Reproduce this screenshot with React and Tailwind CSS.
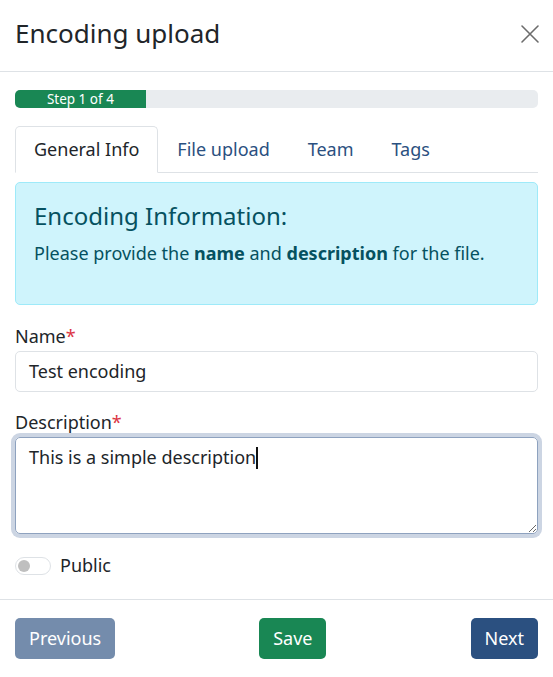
import React from "react";

export default function App() {
  return (
    <div className="w-[553px] h-[677px] bg-white flex flex-col text-[#212529]" style={{ fontFamily: '"Noto Sans", "Open Sans", sans-serif' }}>
      {/* Header */}
      <div className="h-[72px] shrink-0 border-b border-[#dee2e6] flex items-start justify-between pl-[15px] pr-[13px] pt-[14px]">
        <h1 className="text-[26px] leading-[39px] font-normal text-[#212529]">Encoding upload</h1>
        <button className="mt-[10px] w-[20px] h-[20px] flex items-center justify-center text-[#6c6c6c]">
          <svg width="20" height="20" viewBox="0 0 20 20" fill="none" stroke="currentColor" strokeWidth="1.6" strokeLinecap="round">
            <path d="M2 2 L18 18 M18 2 L2 18" />
          </svg>
        </button>
      </div>

      {/* Body */}
      <div className="flex-1 px-[15px] pt-[18px] flex flex-col">
        <div className="h-[18px] w-full rounded-[5px] bg-[#e9ecef] overflow-hidden flex">
          <div className="w-[25%] h-full bg-[#198754] text-white text-[13.5px] leading-[18px] text-center">Step 1 of 4</div>
        </div>

        <div className="mt-[18px] flex border-b border-[#dee2e6] h-[47px]">
          <div className="px-[18px] h-[47px] border border-[#dee2e6] border-b-white rounded-t-[5px] bg-white text-[18px] text-[#212529] flex items-center">General Info</div>
          <div className="px-[19px] h-[46px] text-[18px] text-[#2b5080] flex items-center">File upload</div>
          <div className="px-[19px] h-[46px] text-[18px] text-[#2b5080] flex items-center">Team</div>
          <div className="px-[19px] h-[46px] text-[18px] text-[#2b5080] flex items-center">Tags</div>
        </div>

        <div className="mt-[9px] h-[123px] rounded-[5px] border border-[#9eeaf9] bg-[#cff4fc] text-[#055160] px-[18px] pt-[15px]">
          <h2 className="text-[24px] leading-[36px] font-normal">Encoding Information:</h2>
          <p className="text-[18px] leading-[27px] mt-[6px]">
            Please provide the <b className="font-bold">name</b> and <b className="font-bold">description</b> for the file.
          </p>
        </div>

        <label className="mt-[18px] text-[18px] leading-[27px] text-[#212529]">
          Name<span className="text-[#dc3545]">*</span>
        </label>
        <div className="mt-[1px] h-[41px] border border-[#dee2e6] rounded-[5px] px-[13px] flex items-center text-[18px] text-[#212529]">
          Test encoding
        </div>

        <label className="mt-[17px] text-[18px] leading-[27px] text-[#212529]">
          Description<span className="text-[#dc3545]">*</span>
        </label>
        <div className="mt-[1px] h-[97px] w-full border border-[#8ea2bf] rounded-[5px] px-[13px] py-[6px] text-[18px] leading-[27px] text-[#212529] shadow-[0_0_0_4px_#ccd5e3] resize-y overflow-auto">
          This is a simple description<span className="inline-block w-[2px] h-[22px] bg-[#111] align-[-5px]" />
        </div>

        <div className="mt-[18px] flex items-center gap-[9px]">
          <div className="w-[36px] h-[18px] rounded-full border border-[#dee2e6] bg-white flex items-center pl-[2px]">
            <div className="w-[12px] h-[12px] rounded-full bg-[#bfbfbf]" />
          </div>
          <span className="text-[18px] leading-[27px] text-[#212529]">Public</span>
        </div>
      </div>

      {/* Footer */}
      <div className="h-[78px] shrink-0 border-t border-[#dee2e6] px-[15px] pt-[18px] flex justify-between items-start">
        <button className="h-[41px] px-[14px] rounded-[5px] bg-[#2b5080] opacity-65 text-white text-[18px]">Previous</button>
        <button className="h-[41px] px-[14px] rounded-[5px] bg-[#198754] text-white text-[18px]">Save</button>
        <button className="h-[41px] px-[14px] rounded-[5px] bg-[#2b5080] text-white text-[18px]">Next</button>
      </div>
    </div>
  );
}
